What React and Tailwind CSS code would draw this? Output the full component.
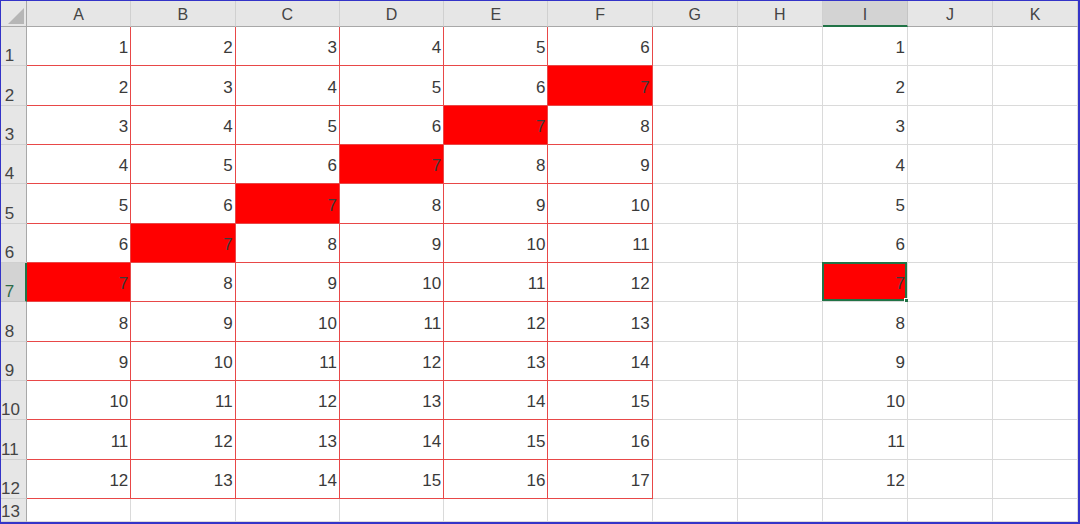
import React from "react"

const cols = ["A", "B", "C", "D", "E", "F", "G", "H", "I", "J", "K"]
const rows = [1, 2, 3, 4, 5, 6, 7, 8, 9, 10, 11, 12, 13]

function Cell({ r, c }) {
  // A1:F12 holds the table with red borders, I1:I12 the list
  const inTable = r <= 12 && c < 6
  const isList = r <= 12 && c === 8
  let value = null
  if (inTable) value = r + c
  if (isList) value = r
  const red = value === 7 && (inTable || isList)
  const selected = isList && r === 7

  const border = inTable ? "border-[#e84848]" : "border-[#dadada]"
  const bg = red ? "bg-[#ff0000]" : "bg-white"

  return (
    <div
      className={`relative flex items-end justify-end border-r border-b ${border} ${bg} pr-[2px] pb-[9px] text-[17px] leading-none text-[#3a3a3a]`}
    >
      {value}
      {selected && (
        <>
          <div className="absolute -left-[1px] -top-[1px] right-0 bottom-0 border-2 border-[#217346]"></div>
          <div className="absolute -right-[3px] -bottom-[3px] w-[6px] h-[6px] bg-[#217346] border border-white"></div>
        </>
      )}
    </div>
  )
}

export default function App() {
  return (
    <div
      className="w-[1080px] h-[524px] bg-white border-l border-t border-r-2 border-b-2 border-[#3434c8] overflow-hidden"
      style={{ fontFamily: '"Liberation Sans", Arial, sans-serif' }}
    >
      <div className="grid h-full grid-cols-[26px_repeat(6,104.3px)_repeat(5,1fr)] grid-rows-[26px_repeat(12,39.35px)_1fr]">
        {/* corner */}
        <div className="relative bg-[#e6e6e6] border-r border-b border-[#a8a8a8]">
          <div
            className="absolute right-[2px] bottom-[2px] w-[16px] h-[16px] bg-[#b6b6b6]"
            style={{ clipPath: "polygon(100% 0, 100% 100%, 0 100%)" }}
          ></div>
        </div>
        {cols.map((col) => (
          <div
            key={col}
            className={`flex items-center justify-center border-r text-[16px] leading-none pt-[3px] text-[#444] ${
              col === "I"
                ? "bg-[#d3d3d3] border-b-2 border-b-[#217346] border-r-[#c4c4c4]"
                : "bg-[#e6e6e6] border-b border-b-[#a8a8a8] border-r-[#d0d0d0]"
            }`}
          >
            {col}
          </div>
        ))}

        {rows.map((r) => (
          <React.Fragment key={r}>
            <div
              className={`flex items-end border-b pb-[1px] text-[17px] leading-none ${
                r === 7
                  ? "bg-[#d3d3d3] border-r-2 border-r-[#217346] text-[#2f6b4a] border-b-[#c4c4c4]"
                  : "bg-[#e6e6e6] border-r border-r-[#a8a8a8] text-[#444] border-b-[#d0d0d0]"
              }`}
            >
              <span className="w-[17px] text-center">{r}</span>
            </div>
            {cols.map((col, c) => (
              <Cell key={col} r={r} c={c} />
            ))}
          </React.Fragment>
        ))}
      </div>
    </div>
  )
}
